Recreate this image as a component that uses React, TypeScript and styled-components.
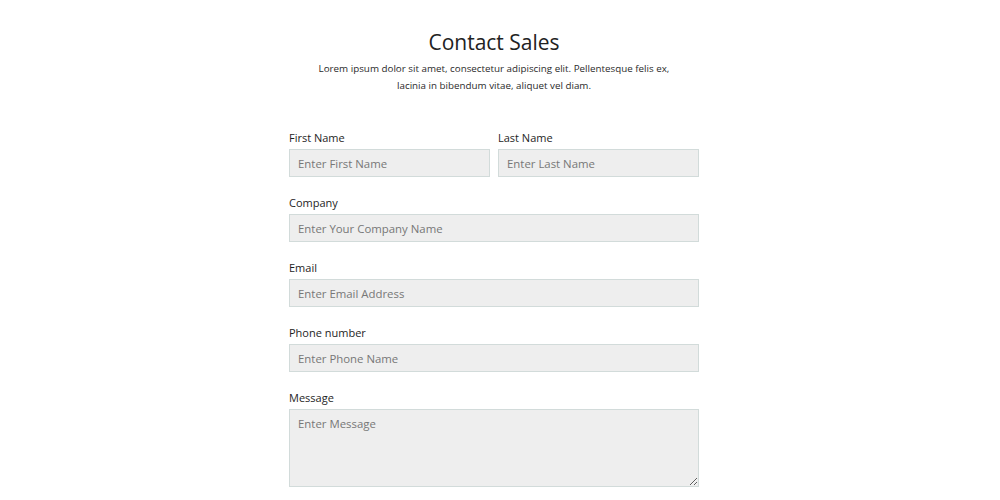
import * as React from 'react';
import styled, { createGlobalStyle } from 'styled-components';

const GlobalStyle = createGlobalStyle`
  html, body {
    margin: 0;
    padding: 0;
    background: #ffffff;
  }
  body {
    font-family: "Open Sans", "Noto Sans", sans-serif;
    color: #222222;
  }
`;

const Page = styled.div`
  display: flex;
  justify-content: center;
  padding: 28px 12px 0 0;
`;

const Wrapper = styled.div`
  width: 410px;
  display: flex;
  flex-direction: column;
`;

const Title = styled.h1`
  margin: 0;
  font-weight: 400;
  font-size: 21px;
  line-height: 28px;
  text-align: center;
  color: #222222;
`;

const Intro = styled.p`
  margin: 4px -40px 0;
  font-size: 9.8px;
  line-height: 17px;
  text-align: center;
  color: #2a2a2a;
`;

const Form = styled.form`
  margin-top: 36px;
  display: flex;
  flex-direction: column;
  gap: 18px;
`;

const Row = styled.div`
  display: grid;
  grid-template-columns: 1fr 1fr;
  gap: 8px;
`;

const Field = styled.div`
  display: flex;
  flex-direction: column;
  gap: 3px;
`;

const Label = styled.label`
  font-size: 11px;
  line-height: 16px;
  color: #1e1e1e;
`;

const inputCss = `
  box-sizing: border-box;
  width: 100%;
  background: #eeeeee;
  border: 1px solid #d2dbda;
  border-radius: 0;
  padding: 0 8px;
  font-family: "Open Sans", "Noto Sans", sans-serif;
  font-size: 11.4px;
  color: #333333;
  outline: none;
  &::placeholder {
    color: #777777;
  }
`;

const Input = styled.input`
  ${inputCss}
  height: 28px;
`;

const TextArea = styled.textarea<{ $rows: number }>`
  ${inputCss}
  height: ${(p) => p.$rows * 26}px;
  padding-top: 6px;
  resize: vertical;
  display: block;
`;

const App: React.FC = () => (
  <>
    <GlobalStyle />
    <Page>
      <Wrapper>
        <Title>Contact Sales</Title>
        <Intro>
          Lorem ipsum dolor sit amet, consectetur adipiscing elit. Pellentesque felis ex,
          <br />
          lacinia in bibendum vitae, aliquet vel diam.
        </Intro>
        <Form>
          <Row>
            <Field>
              <Label>First Name</Label>
              <Input placeholder="Enter First Name" />
            </Field>
            <Field>
              <Label>Last Name</Label>
              <Input placeholder="Enter Last Name" />
            </Field>
          </Row>
          <Field>
            <Label>Company</Label>
            <Input placeholder="Enter Your Company Name" />
          </Field>
          <Field>
            <Label>Email</Label>
            <Input placeholder="Enter Email Address" />
          </Field>
          <Field>
            <Label>Phone number</Label>
            <Input placeholder="Enter Phone Name" />
          </Field>
          <Field>
            <Label>Message</Label>
            <TextArea $rows={3} placeholder="Enter Message" />
          </Field>
        </Form>
      </Wrapper>
    </Page>
  </>
);

export default App;
